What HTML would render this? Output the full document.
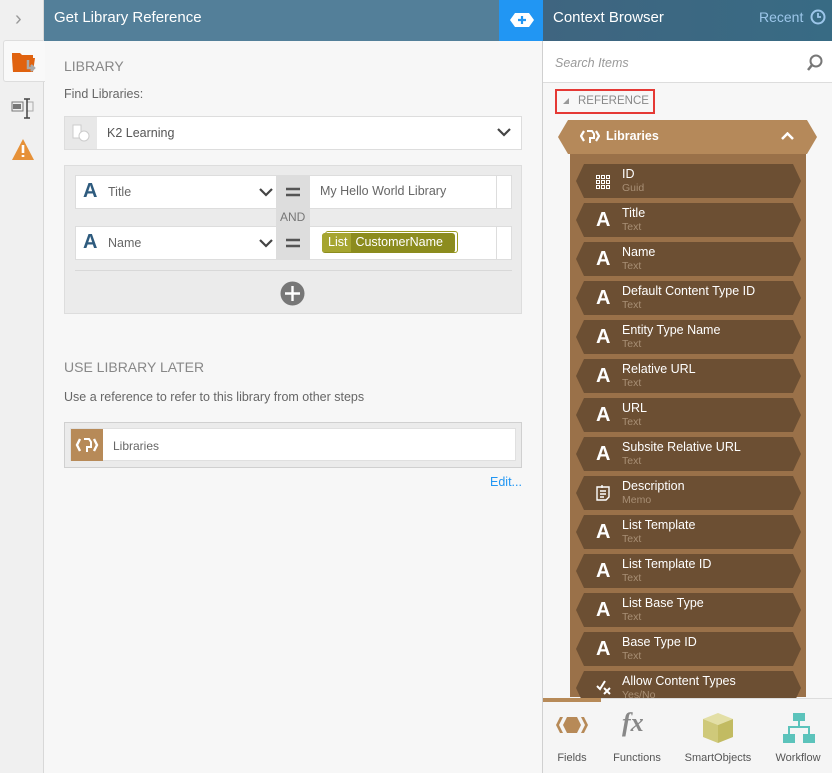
<!DOCTYPE html>
<html><head><meta charset="utf-8"><style>
*{margin:0;padding:0;box-sizing:border-box}
body{width:832px;height:773px;overflow:hidden;font-family:"Liberation Sans",sans-serif;background:#f7f7f7;position:relative;color:#555}
.a{position:absolute}
.hdr1{left:44px;top:0;width:456px;height:41px;background:#537f99;color:#fff;font-size:15px;padding:9px 0 0 10px}
.plus{left:499px;top:0;width:44px;height:41px;background:#2196f3}
.hdr2{left:543px;top:0;width:289px;height:41px;background:linear-gradient(90deg,#3f6580,#386b84);color:#fff;font-size:15px;padding:9px 0 0 10px}
.side{left:0;top:0;width:44px;height:773px;background:#f0f0f0;border-right:1px solid #d8d8d8}
.lbl{font-size:14px;color:#777}
.box{background:#fff;border:1px solid #ddd}
.item{position:absolute;left:576px;width:225px;height:34px;background:#6c4f33;clip-path:polygon(8px 0,217px 0,225px 17px,217px 34px,8px 34px,0 17px)}
.item .n{position:absolute;left:46px;top:3px;color:#fff;font-size:12.5px}
.item .t{position:absolute;left:46px;top:18px;color:#a88f75;font-size:10.5px}
.item .i{position:absolute;left:20px;top:6px;color:#fff;font-size:20px;font-weight:bold}
.tab{font-size:11px;color:#555;text-align:center;position:absolute;top:752px}
</style></head><body>
<div class="a side"></div>
<div class="a" style="left:15px;top:8px;color:#999;font-size:20px">&#x203A;</div>
<div class="a" style="left:3px;top:40px;width:42px;height:42px;background:#f9f9f9;border:1px solid #ddd;border-right:none;border-radius:3px 0 0 3px"></div>
<svg class="a" style="left:11px;top:50px" width="26" height="24"><path d="M1 3h8l2 2h11v3H1z" fill="#e0620f"/><path d="M1 8h23l-2 14H2z" fill="#e0620f"/><path d="M17 10v8h6m-3-3 3 3-3 3" stroke="#aaa" stroke-width="2.5" fill="none"/></svg>
<svg class="a" style="left:11px;top:98px" width="24" height="22"><rect x="1" y="4" width="11" height="9" fill="none" stroke="#777"/><rect x="2" y="6" width="8" height="5" fill="#777"/><rect x="16" y="4" width="6" height="9" fill="none" stroke="#aaa"/><path d="M13 1h6M16 1v19M13 20h6" stroke="#444" stroke-width="1.5"/></svg>
<svg class="a" style="left:11px;top:138px" width="24" height="24"><path d="M12 1 23 22H1z" fill="#e69138"/><path d="M12 7v8M12 17v2" stroke="#fff" stroke-width="2.6"/></svg>

<div class="a hdr1">Get Library Reference</div>
<div class="a plus"><svg style="position:absolute;left:11px;top:13px" width="24" height="14"><path d="M5 0h14l5 7-5 7H5L0 7z" fill="#fff"/><path d="M12 3v8M8 7h8" stroke="#2196f3" stroke-width="2.2"/></svg></div>
<div class="a hdr2">Context Browser</div>
<div class="a" style="left:759px;top:9px;color:#9cc6ea;font-size:14px">Recent</div>
<svg class="a" style="left:810px;top:9px" width="16" height="16"><circle cx="8" cy="8" r="6.5" fill="none" stroke="#9cc6ea" stroke-width="2"/><path d="M8 4v4h3" stroke="#9cc6ea" stroke-width="1.8" fill="none"/></svg>

<!-- main -->
<div class="a lbl" style="left:64px;top:58px;color:#888">LIBRARY</div>
<div class="a" style="left:64px;top:87px;font-size:12.5px;color:#666">Find Libraries:</div>
<div class="a box" style="left:64px;top:116px;width:458px;height:34px"></div>
<div class="a" style="left:65px;top:117px;width:32px;height:32px;background:#e8e8e8"></div>
<svg class="a" style="left:72px;top:124px" width="18" height="18"><rect x="1" y="1" width="8" height="13" fill="#fff" stroke="#ccc"/><circle cx="12" cy="12" r="5" fill="#fff" stroke="#ccc"/></svg>
<div class="a" style="left:107px;top:126px;font-size:12.5px;color:#555">K2 Learning</div>
<svg class="a" style="left:497px;top:127px" width="14" height="10"><path d="M1 2l6 6 6-6" stroke="#444" stroke-width="2.2" fill="none"/></svg>

<div class="a" style="left:64px;top:165px;width:458px;height:149px;background:#ebebeb;border:1px solid #ddd"></div>
<div class="a box" style="left:75px;top:175px;width:437px;height:34px"></div>
<div class="a box" style="left:75px;top:226px;width:437px;height:34px"></div>
<div class="a" style="left:276px;top:175px;width:34px;height:85px;background:#ddd"></div>
<div class="a" style="left:280px;top:210px;font-size:12px;color:#777">AND</div>
<div class="a" style="left:83px;top:180px;font-size:20px;font-weight:bold;color:#2e5b7e">A</div>
<div class="a" style="left:83px;top:231px;font-size:20px;font-weight:bold;color:#2e5b7e">A</div>
<div class="a" style="left:108px;top:185px;font-size:12.5px;color:#666">Title</div>
<div class="a" style="left:108px;top:236px;font-size:12.5px;color:#666">Name</div>
<svg class="a" style="left:259px;top:187px" width="14" height="10"><path d="M1 2l6 6 6-6" stroke="#444" stroke-width="2.2" fill="none"/></svg>
<svg class="a" style="left:259px;top:238px" width="14" height="10"><path d="M1 2l6 6 6-6" stroke="#444" stroke-width="2.2" fill="none"/></svg>
<svg class="a" style="left:285px;top:187px" width="16" height="10"><path d="M1 2h14M1 8h14" stroke="#555" stroke-width="2.4"/></svg>
<svg class="a" style="left:285px;top:238px" width="16" height="10"><path d="M1 2h14M1 8h14" stroke="#555" stroke-width="2.4"/></svg>
<div class="a" style="left:320px;top:184px;font-size:12.5px;color:#666">My Hello World Library</div>
<div class="a" style="left:496px;top:175px;width:1px;height:34px;background:#ddd"></div>
<div class="a" style="left:496px;top:226px;width:1px;height:34px;background:#ddd"></div>
<div class="a" style="left:325px;top:231px;width:133px;height:22px;border:1px solid #9a9a20;border-radius:3px"></div>
<div class="a" style="left:322px;top:233px;width:133px;height:20px;background:#8c8c1e;border-radius:3px;overflow:hidden;color:#fff;font-size:12.5px"><span style="display:inline-block;background:#a6a530;padding:2px 4px 3px 6px">List</span><span style="padding-left:4px">CustomerName</span></div>
<div class="a" style="left:75px;top:270px;width:437px;height:1px;background:#d8d8d8"></div>
<svg class="a" style="left:280px;top:281px" width="25" height="25"><circle cx="12.5" cy="12.5" r="12" fill="#777"/><path d="M12.5 5v15M5 12.5h15" stroke="#fff" stroke-width="2.4"/></svg>

<div class="a lbl" style="left:64px;top:359px;color:#888">USE LIBRARY LATER</div>
<div class="a" style="left:64px;top:390px;font-size:12.5px;color:#666">Use a reference to refer to this library from other steps</div>
<div class="a" style="left:64px;top:422px;width:458px;height:46px;background:#ebebeb;border:1px solid #d0d0d0"></div>
<div class="a box" style="left:70px;top:428px;width:446px;height:33px;border-color:#e0e0e0"></div>
<div class="a" style="left:71px;top:429px;width:32px;height:32px;background:#b78a58"></div>
<svg class="a" style="left:75px;top:435px" width="24" height="20"><path d="M5 4 2 10l3 6M19 4l3 6-3 6" stroke="#fff" stroke-width="2.4" fill="none"/><path d="M9 4h5l2 3v5h-4v5" stroke="#fff" stroke-width="2" fill="none"/></svg>
<div class="a" style="left:113px;top:439px;font-size:12px;color:#666">Libraries</div>
<div class="a" style="left:490px;top:475px;font-size:12.5px;color:#2196f3">Edit...</div>

<!-- right panel -->
<div class="a" style="left:542px;top:41px;width:1px;height:732px;background:#d0d0d0"></div>
<div class="a" style="left:543px;top:41px;width:289px;height:42px;background:#fff;border-bottom:1px solid #ddd"></div>
<div class="a" style="left:555px;top:56px;font-size:12.5px;font-style:italic;color:#999">Search Items</div>
<svg class="a" style="left:806px;top:54px" width="18" height="18"><circle cx="10" cy="7" r="5.5" fill="none" stroke="#777" stroke-width="2"/><path d="M6 11l-4 5" stroke="#777" stroke-width="2.5"/></svg>
<div class="a" style="left:555px;top:89px;width:100px;height:25px;border:2px solid #e53935"></div>
<div class="a" style="left:563px;top:98px;width:0;height:0;border-left:6px solid transparent;border-bottom:6px solid #999"></div>
<div class="a" style="left:578px;top:95px;font-size:11.5px;color:#888">REFERENCE</div>

<div class="a" style="left:570px;top:150px;width:236px;height:547px;background:#9a7149"></div>
<div class="a" style="left:558px;top:120px;width:259px;height:34px;background:#b5895a;clip-path:polygon(10px 0,249px 0,259px 17px,249px 34px,10px 34px,0 17px)"></div>
<svg class="a" style="left:580px;top:128px" width="20" height="17"><path d="M4 3 1 8l3 5M16 3l3 5-3 5" stroke="#fff" stroke-width="2.2" fill="none"/><path d="M7 3h5l2 3v4h-4v5" stroke="#fff" stroke-width="2" fill="none"/></svg>
<div class="a" style="left:606px;top:129px;font-size:12.5px;font-weight:bold;color:#fff">Libraries</div>
<svg class="a" style="left:781px;top:132px" width="13" height="9"><path d="M1 7l5.5-5.5L12 7" stroke="#fff" stroke-width="2.5" fill="none"/></svg>

<div class="item" style="top:164px"><svg style="position:absolute;left:20px;top:11px" width="14" height="14"><g fill="none" stroke="#fff" stroke-width="1"><rect x=".5" y=".5" width="3" height="3"/><rect x="5.5" y=".5" width="3" height="3"/><rect x="10.5" y=".5" width="3" height="3"/><rect x=".5" y="5.5" width="3" height="3"/><rect x="5.5" y="5.5" width="3" height="3"/><rect x="10.5" y="5.5" width="3" height="3"/><rect x=".5" y="10.5" width="3" height="3"/><rect x="5.5" y="10.5" width="3" height="3"/><rect x="10.5" y="10.5" width="3" height="3"/></g></svg><div class="n">ID</div><div class="t">Guid</div></div>
<div class="item" style="top:203px"><div class="i">A</div><div class="n">Title</div><div class="t">Text</div></div>
<div class="item" style="top:242px"><div class="i">A</div><div class="n">Name</div><div class="t">Text</div></div>
<div class="item" style="top:281px"><div class="i">A</div><div class="n">Default Content Type ID</div><div class="t">Text</div></div>
<div class="item" style="top:320px"><div class="i">A</div><div class="n">Entity Type Name</div><div class="t">Text</div></div>
<div class="item" style="top:359px"><div class="i">A</div><div class="n">Relative URL</div><div class="t">Text</div></div>
<div class="item" style="top:398px"><div class="i">A</div><div class="n">URL</div><div class="t">Text</div></div>
<div class="item" style="top:437px"><div class="i">A</div><div class="n">Subsite Relative URL</div><div class="t">Text</div></div>
<div class="item" style="top:476px"><svg style="position:absolute;left:20px;top:9px" width="14" height="16"><path d="M1 2h12v10l-3 3H1z" fill="none" stroke="#fff" stroke-width="1.4"/><path d="M4 6h6M4 9h6M4 12h4M6 0v3" stroke="#fff" stroke-width="1.4"/></svg><div class="n">Description</div><div class="t">Memo</div></div>
<div class="item" style="top:515px"><div class="i">A</div><div class="n">List Template</div><div class="t">Text</div></div>
<div class="item" style="top:554px"><div class="i">A</div><div class="n">List Template ID</div><div class="t">Text</div></div>
<div class="item" style="top:593px"><div class="i">A</div><div class="n">List Base Type</div><div class="t">Text</div></div>
<div class="item" style="top:632px"><div class="i">A</div><div class="n">Base Type ID</div><div class="t">Text</div></div>
<div class="item" style="top:671px"><svg style="position:absolute;left:20px;top:8px" width="16" height="16"><path d="M1 7l3 3 5-8M8 9l6 6M14 9l-6 6" stroke="#fff" stroke-width="2" fill="none"/></svg><div class="n">Allow Content Types</div><div class="t">Yes/No</div></div>

<div class="a" style="left:543px;top:698px;width:289px;height:75px;background:#f5f5f5;border-top:1px solid #ddd"></div>
<div class="a" style="left:543px;top:698px;width:58px;height:4px;background:#b78a58"></div>
<svg class="a" style="left:555px;top:714px" width="34" height="22"><path d="M5 3 1 11l4 8h3L4 11l4-8z" fill="#b78a58"/><path d="M29 3l4 8-4 8h-3l4-8-4-8z" fill="#b78a58"/><path d="M12 3h10l4 8-4 8H12l-4-8z" fill="#b78a58"/></svg>
<div class="a" style="left:622px;top:708px;font-family:'Liberation Serif',serif;font-style:italic;font-weight:bold;font-size:26px;color:#888">fx</div>
<svg class="a" style="left:702px;top:712px" width="32" height="32"><path d="M16 1 31 7 16 13 1 7z" fill="#e3dfa6"/><path d="M1 7l15 6v18L1 25z" fill="#cfc97a"/><path d="M31 7 16 13v18l15-6z" fill="#c2bb62"/></svg>
<svg class="a" style="left:783px;top:713px" width="32" height="32"><rect x="10" y="0" width="12" height="8" fill="#5cc3bb"/><rect x="0" y="21" width="12" height="9" fill="#5cc3bb"/><rect x="20" y="21" width="12" height="9" fill="#5cc3bb"/><path d="M16 8v6M6 21v-7h20v7" stroke="#5cc3bb" stroke-width="2" fill="none"/></svg>
<div class="tab" style="left:552px;width:40px">Fields</div>
<div class="tab" style="left:610px;width:54px">Functions</div>
<div class="tab" style="left:682px;width:72px">SmartObjects</div>
<div class="tab" style="left:770px;width:56px">Workflow</div>
</body></html>
